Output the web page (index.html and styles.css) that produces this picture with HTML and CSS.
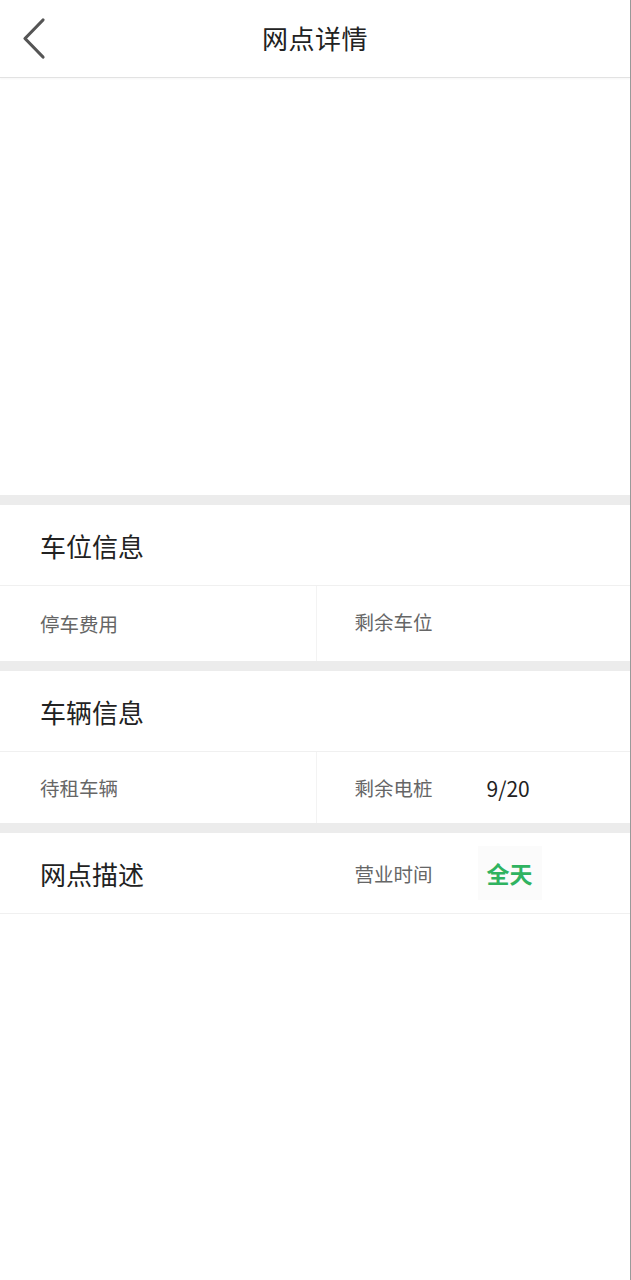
FILE: index.html
```html
<!DOCTYPE html>
<html lang="zh">
<head>
<meta charset="utf-8">
<title>网点详情</title>
<link rel="stylesheet" href="styles.css">
</head>
<body>
<div class="page">
  <header class="nav">
    <span class="back">
      <svg width="30" height="44" viewBox="0 0 30 44"><path d="M22 3 L4 21.5 L22 40" fill="none" stroke="#555" stroke-width="3.2" stroke-linecap="round" stroke-linejoin="round"/></svg>
    </span>
    <h1 class="title">网点详情</h1>
  </header>
  <div class="map"></div>
  <div class="gap"></div>
  <section class="block">
    <div class="head">车位信息</div>
    <div class="row two first">
      <div class="cell"><span class="label low">停车费用</span></div>
      <div class="cell right"><span class="label">剩余车位</span></div>
    </div>
  </section>
  <div class="gap"></div>
  <section class="block">
    <div class="head">车辆信息</div>
    <div class="row two short">
      <div class="cell"><span class="label">待租车辆</span></div>
      <div class="cell right"><span class="label">剩余电桩</span><span class="value">9/20</span></div>
    </div>
  </section>
  <div class="gap"></div>
  <section class="block">
    <div class="head desc">
      <div class="cell">网点描述</div>
      <div class="cell right"><span class="label">营业时间</span><span class="green">全天</span></div>
    </div>
  </section>
  <div class="rest"></div>
</div>
</body>
</html>
```

FILE: styles.css
```css
html, body {
  margin: 0;
  padding: 0;
  background: #fff;
}
body {
  font-family: "Noto Sans CJK SC", "Noto Sans", sans-serif;
  color: #222;
}
.page {
  width: 630px;
  min-height: 1280px;
  border-right: 1px solid #9a9a9a;
  background: #fff;
  display: flex;
  flex-direction: column;
}
.nav {
  height: 77px;
  background: #fff;
  border-bottom: 1px solid #e2e2e2;
  box-shadow: 0 1px 2px rgba(0,0,0,0.04);
  position: relative;
  display: flex;
  align-items: center;
  justify-content: center;
}
.back {
  position: absolute;
  left: 21px;
  top: 17px;
  display: block;
  width: 30px;
  height: 44px;
}
.back svg { display: block; }
.title {
  margin: 0 0 2px;
  font-size: 26px;
  font-weight: 400;
  color: #222;
  letter-spacing: 0.5px;
}
.map {
  height: 417px;
  background: #fff;
}
.gap {
  height: 10px;
  background: #ececec;
}
.block {
  background: #fff;
}
.head {
  height: 80px;
  border-bottom: 1px solid #f0f0f0;
  padding-left: 40px;
  display: flex;
  align-items: center;
  font-size: 26px;
  color: #222;
}
.row {
  height: 75px;
  display: flex;
}
.row.first .cell { padding-bottom: 5px; }
.row.short { height: 71px; }
.cell {
  flex: 1;
  display: flex;
  align-items: center;
  padding-left: 40px;
  box-sizing: border-box;
}
.cell.right {
  border-left: 1px solid #f3f3f3;
  padding-left: 38px;
}
.label {
  font-size: 19.5px;
  color: #666;
}
.label.low { position: relative; top: 2px; }
.value {
  margin-left: 54px;
  font-size: 21px;
  color: #222;
}
.head.desc {
  padding-left: 0;
  height: 80px;
}
.head.desc .cell {
  height: 100%;
}
.head.desc .cell.right {
  border-left: none;
  padding-left: 39px;
}
.green {
  margin-left: 45px;
  padding: 10px 9px;
  background: #fbfbfb;
  font-size: 23px;
  font-weight: 700;
  color: #2fb360;
}
.rest {
  flex: 1;
  background: #fff;
}
```
